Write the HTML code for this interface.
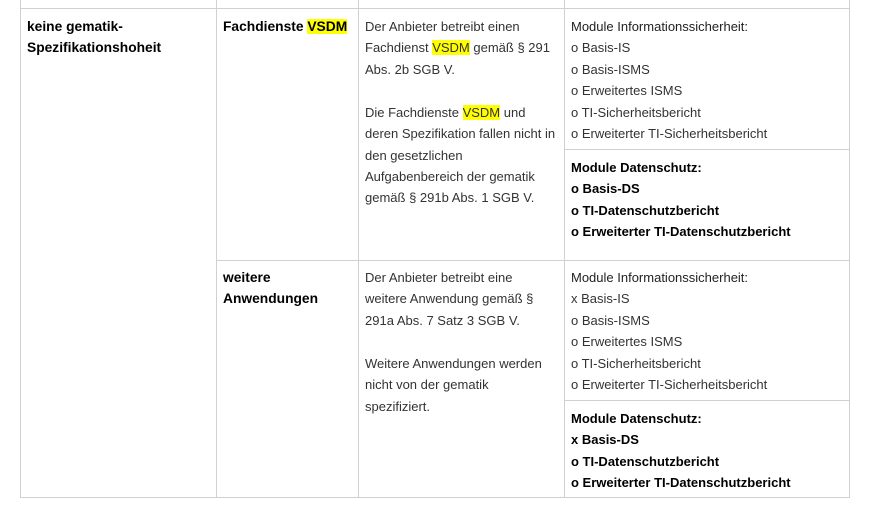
<!DOCTYPE html>
<html><head><meta charset="utf-8"><style>
body{margin:0;width:875px;height:507px;background:#fff;position:relative;overflow:hidden;font-family:"Liberation Sans",sans-serif;font-size:13px;color:#333}
.l{position:absolute;background:#d0d0d0}
.t{position:absolute;white-space:nowrap;line-height:16px;transform:translateY(-7px)}
.b{font-weight:bold;color:#000}
.k{font-size:13.8px}
.h{background:#ffff00}
</style></head><body>
<div class="l" style="left:20px;top:0;width:1px;height:498px"></div>
<div class="l" style="left:216px;top:0;width:1px;height:498px"></div>
<div class="l" style="left:358px;top:0;width:1px;height:498px"></div>
<div class="l" style="left:564px;top:0;width:1px;height:498px"></div>
<div class="l" style="left:849px;top:0;width:1px;height:498px"></div>
<div class="l" style="left:20px;top:8px;width:830px;height:1px"></div>
<div class="l" style="left:216px;top:260px;width:634px;height:1px"></div>
<div class="l" style="left:20px;top:497px;width:830px;height:1px"></div>
<div class="l" style="left:564px;top:149px;width:286px;height:1px"></div>
<div class="l" style="left:564px;top:400px;width:286px;height:1px"></div>

<div class="t b k" style="left:27px;top:26px">keine gematik-</div>
<div class="t b k" style="left:27px;top:47px">Spezifikationshoheit</div>

<div class="t b k" style="left:223px;top:26px">Fachdienste <span class="h">VSDM</span></div>
<div class="t" style="left:365px;top:26px">Der Anbieter betreibt einen</div>
<div class="t" style="left:365px;top:47px">Fachdienst <span class="h">VSDM</span> gemäß § 291</div>
<div class="t" style="left:365px;top:69px">Abs. 2b SGB V.</div>
<div class="t" style="left:365px;top:112px">Die Fachdienste <span class="h">VSDM</span> und</div>
<div class="t" style="left:365px;top:133px">deren Spezifikation fallen nicht in</div>
<div class="t" style="left:365px;top:155px">den gesetzlichen</div>
<div class="t" style="left:365px;top:176px">Aufgabenbereich der gematik</div>
<div class="t" style="left:365px;top:197px">gemäß § 291b Abs. 1 SGB V.</div>

<div class="t" style="left:571px;top:26px;color:#222">Module Informationssicherheit:</div>
<div class="t" style="left:571px;top:47px">o Basis-IS</div>
<div class="t" style="left:571px;top:69px">o Basis-ISMS</div>
<div class="t" style="left:571px;top:90px">o Erweitertes ISMS</div>
<div class="t" style="left:571px;top:112px">o TI-Sicherheitsbericht</div>
<div class="t" style="left:571px;top:133px">o Erweiterter TI-Sicherheitsbericht</div>
<div class="t b" style="left:571px;top:167px">Module Datenschutz:</div>
<div class="t b" style="left:571px;top:188px">o Basis-DS</div>
<div class="t b" style="left:571px;top:210px">o TI-Datenschutzbericht</div>
<div class="t b" style="left:571px;top:231px">o Erweiterter TI-Datenschutzbericht</div>

<div class="t b k" style="left:223px;top:277px">weitere</div>
<div class="t b k" style="left:223px;top:298px">Anwendungen</div>
<div class="t" style="left:365px;top:277px">Der Anbieter betreibt eine</div>
<div class="t" style="left:365px;top:298px">weitere Anwendung gemäß §</div>
<div class="t" style="left:365px;top:320px">291a Abs. 7 Satz 3 SGB V.</div>
<div class="t" style="left:365px;top:363px">Weitere Anwendungen werden</div>
<div class="t" style="left:365px;top:384px">nicht von der gematik</div>
<div class="t" style="left:365px;top:406px">spezifiziert.</div>

<div class="t" style="left:571px;top:277px;color:#222">Module Informationssicherheit:</div>
<div class="t" style="left:571px;top:298px">x Basis-IS</div>
<div class="t" style="left:571px;top:320px">o Basis-ISMS</div>
<div class="t" style="left:571px;top:341px">o Erweitertes ISMS</div>
<div class="t" style="left:571px;top:363px">o TI-Sicherheitsbericht</div>
<div class="t" style="left:571px;top:384px">o Erweiterter TI-Sicherheitsbericht</div>
<div class="t b" style="left:571px;top:418px">Module Datenschutz:</div>
<div class="t b" style="left:571px;top:439px">x Basis-DS</div>
<div class="t b" style="left:571px;top:461px">o TI-Datenschutzbericht</div>
<div class="t b" style="left:571px;top:482px">o Erweiterter TI-Datenschutzbericht</div>
</body></html>
